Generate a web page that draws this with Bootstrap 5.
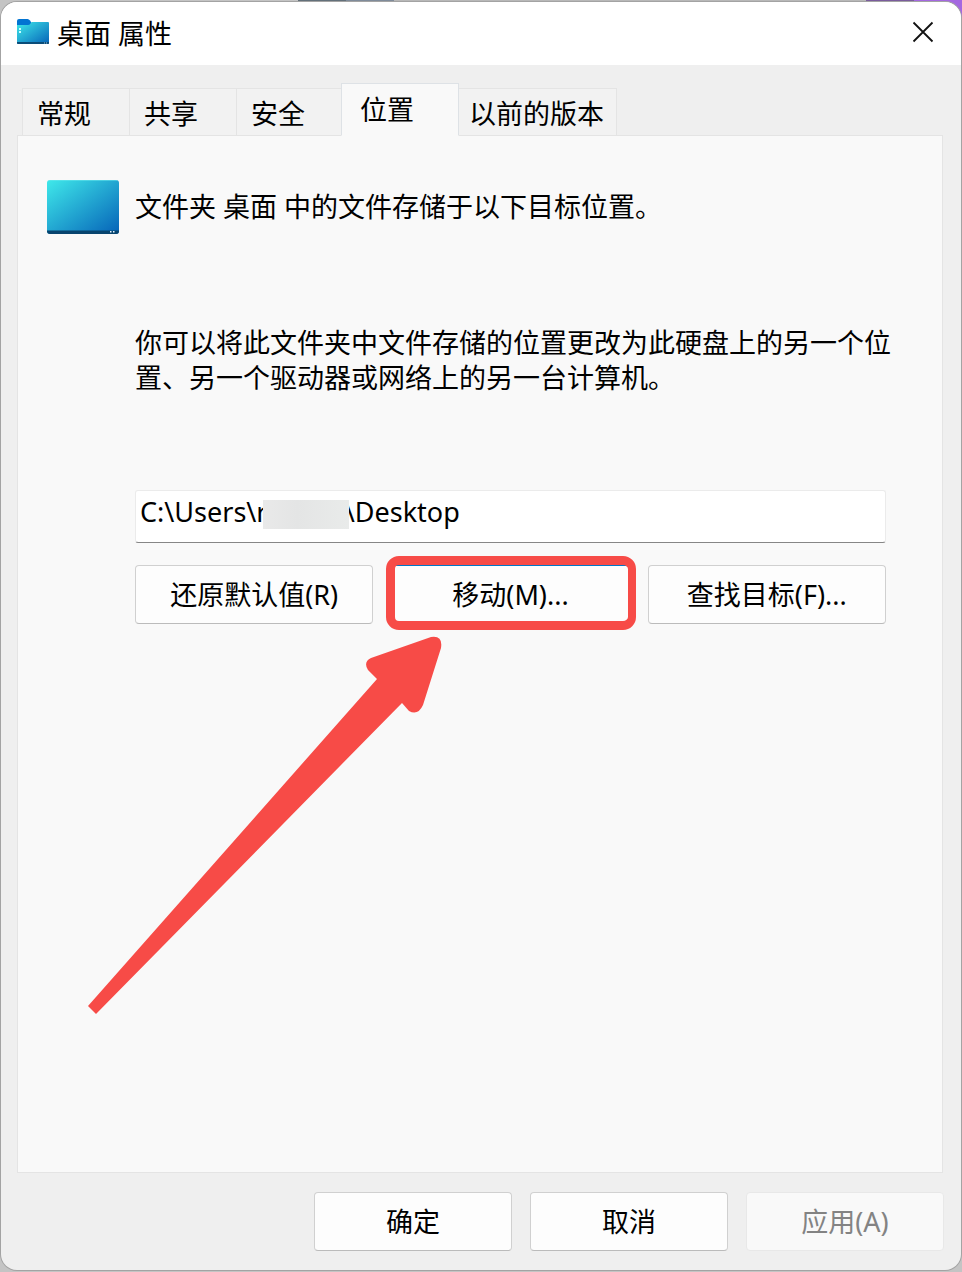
<!DOCTYPE html>
<html lang="zh-CN">
<head>
<meta charset="utf-8">
<meta name="viewport" content="width=device-width, initial-scale=1">
<title>桌面 属性</title>
<link href="https://cdn.jsdelivr.net/npm/bootstrap@5.3.0/dist/css/bootstrap.min.css" rel="stylesheet">
<style>
  body {
    font-family: "Noto Sans", "Noto Sans CJK SC", sans-serif;
    font-size: 27px;
    line-height: 35px;
    color: #000;
    background: linear-gradient(90deg, #c4c4c4 0 31%, #63707a 31% 36%, #7f8b9a 36% 41%, #b8b8b8 41% 90%, #7a5c9c 90% 95%, #a468e0 95%) top / 100% 60px no-repeat, #c4c4c4;
    padding: 2px 1px;
  }
  .dialog {
    min-height: calc(100vh - 4px);
    background: #efefef;
    border-radius: 16px;
    box-shadow: 0 0 0 1px #a3a3a3;
    overflow: hidden;
  }
  .title-bar { height: 63px; background: #fff; padding: 0 27px 0 16px; }
  .title-bar h1 { font-size: 27px; line-height: 35px; font-weight: 400; }
  .close-btn { line-height: 0; }
  .sheet { padding: 18px 18px 0 16px; }
  .tab-strip { padding-left: 5px; border: 0; }
  .tab-strip .nav-link {
    min-width: 108px;
    height: 48px;
    padding: 3px 12px 0 14px;
    margin: 0 -1px -1px 0;
    text-align: left;
    color: #000;
    background: #f2f2f2;
    border: 1px solid #e4e4e4;
    border-radius: 0;
  }
  .tab-strip .nav-link.active {
    position: relative;
    z-index: 1;
    min-width: 118px;
    height: 53px;
    padding: 0 18px 1px;
    margin-left: -2px;
    background: #f9f9f9;
    border-bottom-color: #f9f9f9;
  }
  .tab-strip .tab-last { padding: 3px 12px 0 10px; }
  .panel {
    background: #f9f9f9;
    border: 1px solid #e4e4e4;
    padding: 44px 36px 44px 29px;
  }
  .intro { gap: 16px; }
  .intro p { padding-bottom: 2px; }
  .details { padding-left: 88px; }
  .explain { margin: 91px 0 95px; }
  .target { margin-right: 20px; }
  .path-input {
    height: 53px;
    padding: 0 4px 11px;
    font-size: 27px;
    color: #000;
    background: #fff;
    border: 1px solid #ebebeb;
    border-bottom-color: #868686;
    border-radius: 3px;
  }
  .mask {
    position: absolute;
    left: 128px;
    top: 10px;
    width: 86px;
    height: 29px;
    background: linear-gradient(90deg, #e9e9e9, #e4e5e5 40%, #e9ebea);
  }
  .actions { display: grid; grid-template-columns: repeat(3, 1fr); gap: 18px; margin-top: 22px; }
  .btn-win {
    height: 59px;
    padding: 0 8px;
    font-size: 27px;
    line-height: 35px;
    color: #000;
    background: #fdfdfd;
    border: 1px solid #d0d0d0;
    border-bottom-color: #bbb;
    border-radius: 4px;
  }
  .btn-win:disabled { color: #838383; background: #f9f9f9; border-color: #e8e8e8; opacity: 1; }
  .btn-focus { border-color: #0078c8; }
  .callout-frame {
    position: absolute;
    inset: -9px -6px -6px -5px;
    border: 9px solid #f74b47;
    border-right-width: 8px;
    border-radius: 13px;
    pointer-events: none;
  }
  .callout-arrow { position: absolute; right: 188px; top: 71px; pointer-events: none; }
  .dialog-foot { gap: 18px; padding: 19px 17px 19px 16px; }
  .dialog-foot .btn-win { width: 198px; }
</style>
</head>
<body>
<main class="dialog d-flex flex-column">
  <header class="title-bar d-flex align-items-center">
    <svg width="32" height="26" viewBox="0 0 32 26" class="me-2 mb-1" aria-hidden="true">
      <defs>
        <linearGradient id="deskFill" x1="0" y1="0" x2="1" y2="1">
          <stop offset="0" stop-color="#3fe9ea"/><stop offset="1" stop-color="#0562b8"/>
        </linearGradient>
      </defs>
      <path d="M0 2Q0 0 2 0H10.500Q12 0 13 1.500L14 3V9H0Z" fill="#0274d2"/>
      <path d="M0 6H11Q12.500 6 13.500 4.500L14.500 3H31Q32 3 32 4V24Q32 25 31 25H1Q0 25 0 24Z" fill="url(#deskFill)"/>
      <path d="M0 23H32V24Q32 25 31 25H1Q0 25 0 24Z" fill="#0b4c78"/>
      <path d="M2 9h2v2h-2zM2 12h2v2h-2z" fill="#c8ffff"/>
      <path d="M27 23.500h1v1h-1zM29 23.500h1v1h-1z" fill="#8fc0de"/>
    </svg>
    <h1 class="mb-0 me-auto">桌面 属性</h1>
    <button type="button" class="btn p-0 border-0 close-btn mb-1" aria-label="关闭">
      <svg width="22" height="22" viewBox="0 0 22 22" aria-hidden="true"><path d="M1.500 1.500L20.500 20.500M20.500 1.500L1.500 20.500" stroke="#111" stroke-width="1.800" fill="none"/></svg>
    </button>
  </header>

  <section class="sheet d-flex flex-column flex-grow-1">
    <div class="nav nav-tabs tab-strip align-items-end" role="tablist">
      <button type="button" class="nav-link" role="tab" aria-selected="false">常规</button>
      <button type="button" class="nav-link" role="tab" aria-selected="false">共享</button>
      <button type="button" class="nav-link" role="tab" aria-selected="false">安全</button>
      <button type="button" class="nav-link active" role="tab" aria-selected="true" aria-controls="location">位置</button>
      <button type="button" class="nav-link tab-last" role="tab" aria-selected="false">以前的版本</button>
    </div>

    <div class="panel flex-grow-1" id="location" role="tabpanel">
      <div class="intro d-flex align-items-center">
        <svg class="flex-shrink-0" width="72" height="54" viewBox="0 0 72 54" aria-hidden="true">
          <rect width="72" height="54" rx="3" fill="url(#deskFill)"/>
          <path d="M0 50.500H72V51Q72 54 69 54H3Q0 54 0 51Z" fill="#08446e"/>
          <path d="M63 51h1.500v1.500h-1.500zM66 51h1.500v1.500h-1.500z" fill="#e4f4ff"/>
          <path d="M2 .5H70" stroke="#6ee9ee" stroke-opacity=".5"/>
        </svg>
        <p class="mb-0">文件夹 桌面 中的文件存储于以下目标位置。</p>
      </div>

      <div class="details">
        <p class="explain">你可以将此文件夹中文件存储的位置更改为此硬盘上的另一个位置、另一个驱动器或网络上的另一台计算机。</p>
        <div class="target">
          <div class="position-relative">
            <input type="text" class="form-control path-input" aria-label="目标位置" value="C:\Users\r           \Desktop">
            <span class="mask"></span>
          </div>
          <div class="actions">
            <button type="button" class="btn btn-win">还原默认值(R)</button>
            <div class="position-relative d-grid">
              <button type="button" class="btn btn-win btn-focus">移动(M)...</button>
              <span class="callout-frame"></span>
              <svg class="callout-arrow" width="354" height="378" viewBox="0 0 354 378" aria-hidden="true">
                <path d="M0 370L289 43L280 34Q275 26 283 22L343 1Q355 -1 353 12L335 69Q330 80 321 75L314 67L8 378Z" fill="#f74b47"/>
              </svg>
            </div>
            <button type="button" class="btn btn-win">查找目标(F)...</button>
          </div>
        </div>
      </div>
    </div>
  </section>

  <footer class="dialog-foot d-flex justify-content-end">
    <button type="button" class="btn btn-win">确定</button>
    <button type="button" class="btn btn-win">取消</button>
    <button type="button" class="btn btn-win" disabled>应用(A)</button>
  </footer>
</main>
<script src="https://cdn.jsdelivr.net/npm/bootstrap@5.3.0/dist/js/bootstrap.bundle.min.js"></script>
</body>
</html>
